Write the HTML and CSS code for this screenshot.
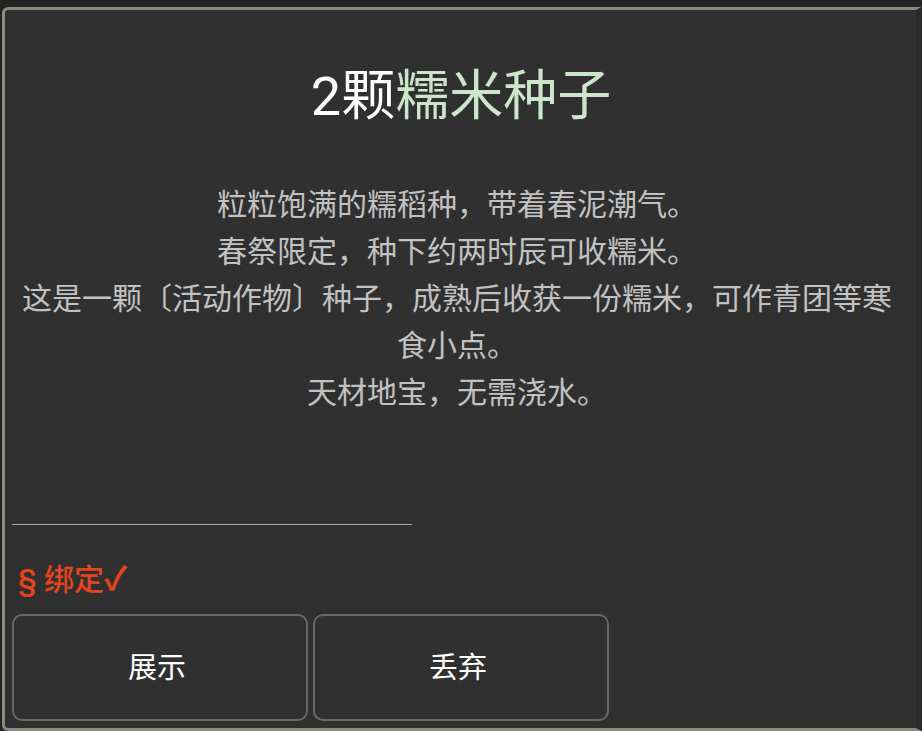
FILE: index.html
```html
<!DOCTYPE html>
<html lang="zh-CN">
<head>
<meta charset="utf-8">
<title>糯米种子</title>
<link rel="stylesheet" href="styles.css">
</head>
<body>
<div class="panel">
  <h1 class="title"><span class="count">2颗</span><span class="name">糯米种子</span></h1>
  <div class="desc">
    <p>粒粒饱满的糯稻种，带着春泥潮气。</p>
    <p>春祭限定，种下约两时辰可收糯米。</p>
    <p>这是一颗〔活动作物〕种子，成熟后收获一份糯米，可作青团等寒食小点。</p>
    <p>天材地宝，无需浇水。</p>
  </div>
  <div class="spacer"></div>
  <hr class="sep">
  <div class="bind">§ 绑定<span class="check">✓</span></div>
  <div class="actions">
    <button class="btn">展示</button>
    <button class="btn">丢弃</button>
  </div>
</div>
</body>
</html>
```
FILE: styles.css
```css
html, body {
  margin: 0;
  padding: 0;
}
body {
  background: #242424;
  width: 922px;
  height: 731px;
  overflow: hidden;
  font-family: Roboto, "Noto Sans CJK SC", sans-serif;
}
.panel {
  box-sizing: border-box;
  margin: 7px 0 0 2px;
  width: 920px;
  height: 724px;
  background: #303030;
  border: 3px solid #8b8b80;
  border-right: 6px solid #2a2a2a;
  border-radius: 6px 0 0 6px;
  padding: 0 14px 7px 7px;
  display: flex;
  flex-direction: column;
}
.title {
  margin: 55px 0 0;
  font-weight: 400;
  font-size: 54px;
  line-height: 64px;
  text-align: center;
  padding-left: 8px;
}
.count { color: #ffffff; }
.name { color: #cde6cb; }
.desc {
  margin-top: 52px;
  color: #c2c2c2;
  font-size: 30px;
  line-height: 47px;
  text-align: center;
}
.desc p { margin: 0; }
.spacer { flex: 1; }
.sep {
  width: 400px;
  margin: 0 0 36px;
  border: 0;
  height: 1px;
  background: #a8a8a8;
}
.bind {
  color: #e5451d;
  font-size: 30px;
  font-weight: 500;
  line-height: 36px;
  padding-left: 6px;
  margin-bottom: 16px;
}
.check {
  font-weight: 700;
  font-size: 32px;
}
.actions {
  display: flex;
  gap: 5px;
}
.btn {
  box-sizing: border-box;
  width: 296px;
  height: 107px;
  background: #303030;
  border: 2px solid #686868;
  border-radius: 10px;
  color: #ffffff;
  font-family: Roboto, "Noto Sans CJK SC", sans-serif;
  font-size: 29px;
  padding: 0 6px 6px 0;
}
```
